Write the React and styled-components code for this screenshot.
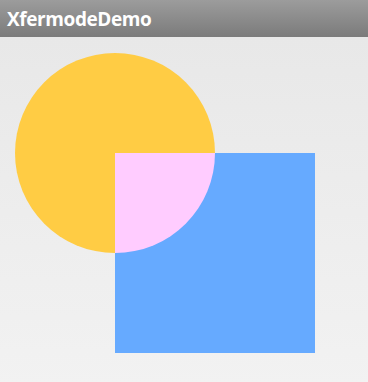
import React from "react";
import styled, { createGlobalStyle } from "styled-components";

const GlobalStyle = createGlobalStyle`
   html, body {
      margin: 0;
      padding: 0;
      width: 368px;
      height: 382px;
      overflow: hidden;
   }
`;

const Pantalla = styled.div`
   width: 368px;
   height: 382px;
   display: flex;
   flex-direction: column;
   font-family: "Open Sans", Roboto, "Liberation Sans", sans-serif;
`;

const BarraTitulo = styled.div`
   height: 37px;
   flex-shrink: 0;
   display: flex;
   align-items: center;
   padding-left: 7px;
   background: linear-gradient(to bottom, #9c9c9c, #7b7b7b);
   color: white;
   font-size: 19px;
   font-weight: bold;
   letter-spacing: -0.4px;
`;

const Lienzo = styled.div`
   flex: 1;
   background: linear-gradient(to bottom, #e8e8e8, #f2f2f2);
`;

const Dibujo = () => (
   <svg width="368" height="345" viewBox="0 0 368 345">
      <defs>
         <clipPath id="recorte-cuadro">
            <rect x="115" y="116" width="200" height="200" />
         </clipPath>
      </defs>
      <circle cx="115" cy="116" r="100" fill="#ffcc44" />
      <rect x="115" y="116" width="200" height="200" fill="#66aaff" />
      <circle cx="115" cy="116" r="100" fill="#ffccff" clipPath="url(#recorte-cuadro)" />
   </svg>
);

const App = () => {
   return (
      <Pantalla>
         <GlobalStyle />
         <BarraTitulo>XfermodeDemo</BarraTitulo>
         <Lienzo>
            <Dibujo />
         </Lienzo>
      </Pantalla>
   );
};

export default App;
